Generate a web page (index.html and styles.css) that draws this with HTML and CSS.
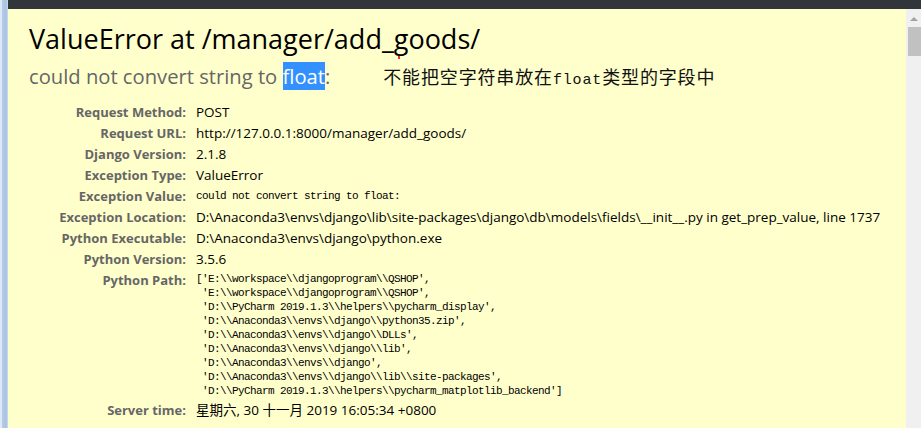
FILE: index.html
```html
<!DOCTYPE html>
<html>
<head>
<meta charset="utf-8">
<link rel="stylesheet" href="styles.css">
</head>
<body>
<div class="frame">
  <div class="strip"></div>
  <div class="main">
    <div class="topbar"></div>
    <div class="view">
      <div class="summary">
        <h1 class="title">ValueError at /manager/add_goods/</h1>
        <div class="subline">
          <span class="exc">could not convert string to <span class="sel">float</span>:</span>
          <span class="note">不能把空字符串放在<span class="note-mono">float</span>类型的字段中</span>
        </div>
        <span class="caret"></span>
        <div class="meta">
          <div class="lbl">Request Method:</div><div class="val">POST</div>
          <div class="lbl">Request URL:</div><div class="val">http://127.0.0.1:8000/manager/add_goods/</div>
          <div class="lbl">Django Version:</div><div class="val">2.1.8</div>
          <div class="lbl">Exception Type:</div><div class="val">ValueError</div>
          <div class="lbl">Exception Value:</div><div class="val"><pre class="mono one">could not convert string to float:</pre></div>
          <div class="lbl">Exception Location:</div><div class="val">D:\Anaconda3\envs\django\lib\site-packages\django\db\models\fields\__init__.py in get_prep_value, line 1737</div>
          <div class="lbl">Python Executable:</div><div class="val">D:\Anaconda3\envs\django\python.exe</div>
          <div class="lbl">Python Version:</div><div class="val">3.5.6</div>
          <div class="lbl">Python Path:</div><div class="val"><pre class="mono path">['E:\\workspace\\djangoprogram\\QSHOP',
 'E:\\workspace\\djangoprogram\\QSHOP',
 'D:\\PyCharm 2019.1.3\\helpers\\pycharm_display',
 'D:\\Anaconda3\\envs\\django\\python35.zip',
 'D:\\Anaconda3\\envs\\django\\DLLs',
 'D:\\Anaconda3\\envs\\django\\lib',
 'D:\\Anaconda3\\envs\\django',
 'D:\\Anaconda3\\envs\\django\\lib\\site-packages',
 'D:\\PyCharm 2019.1.3\\helpers\\pycharm_matplotlib_backend']</pre></div>
          <div class="lbl">Server time:</div><div class="val">星期六, 30 十一月 2019 16:05:34 +0800</div>
        </div>
      </div>
      <div class="scrollbar">
        <div class="arrow"></div>
        <div class="thumb"></div>
      </div>
    </div>
  </div>
</div>
</body>
</html>
```
FILE: styles.css
```css
html, body {
  margin: 0;
  padding: 0;
  height: 100%;
  overflow: hidden;
}
body {
  font-family: "Open Sans", "Noto Sans CJK SC", sans-serif;
  background: #ffffcc;
}
.frame {
  display: flex;
  height: 428px;
}
.strip {
  width: 8px;
  flex: none;
  background: linear-gradient(to right, #dce9f8 0, #dce9f8 2px, #b7cde6 2px, #a9c2df 6px, #c9dcf2 8px);
}
.main {
  flex: 1;
  display: flex;
  flex-direction: column;
}
.topbar {
  height: 9px;
  background: #323539;
  flex: none;
}
.view {
  flex: 1;
  display: flex;
}
.summary {
  flex: 1;
  background: #ffffcc;
  padding: 12px 0 0 21px;
  position: relative;
}
.title {
  margin: 0;
  font-weight: normal;
  font-size: 27px;
  line-height: 36px;
  color: #000;
}
.subline {
  display: flex;
  align-items: baseline;
  margin-top: 6px;
  height: 39px;
}
.exc {
  font-size: 20.2px;
  color: #666;
  line-height: 26px;
}
.sel {
  background: #3390ff;
  color: #fff;
}
.note {
  margin-left: 53px;
  font-family: "Noto Sans CJK SC", sans-serif;
  font-size: 18px;
  color: #111;
  letter-spacing: 0.85px;
}
.note-mono {
  font-family: "Liberation Mono", monospace;
  font-size: 15px;
}
.caret {
  position: absolute;
  left: 390px;
  top: 47px;
  width: 2px;
  height: 3px;
  background: #f03030;
}
.meta {
  display: grid;
  grid-template-columns: 157px 1fr;
  column-gap: 10px;
  font-size: 13px;
  line-height: 21px;
}
.lbl {
  text-align: right;
  font-weight: bold;
  color: #666;
}
.val {
  color: #000;
  white-space: nowrap;
  font-size: 13.5px;
}
.mono {
  margin: 0;
  font-family: "Liberation Mono", monospace;
  font-size: 11px;
  letter-spacing: -0.6px;
  color: #000;
}
.one {
  line-height: 21px;
}
.path {
  line-height: 14px;
  padding: 2px 0 2px 0;
}
.scrollbar {
  width: 15px;
  flex: none;
  background: #f0f0f0;
  display: flex;
  flex-direction: column;
  align-items: center;
}
.arrow {
  margin-top: 8px;
  width: 0;
  height: 0;
  border-left: 4px solid transparent;
  border-right: 4px solid transparent;
  border-bottom: 4px solid #a3a3a3;
}
.thumb {
  margin-top: 6px;
  width: 13px;
  margin-left: 2px;
  height: 29px;
  background: #c1c1c1;
}
```
